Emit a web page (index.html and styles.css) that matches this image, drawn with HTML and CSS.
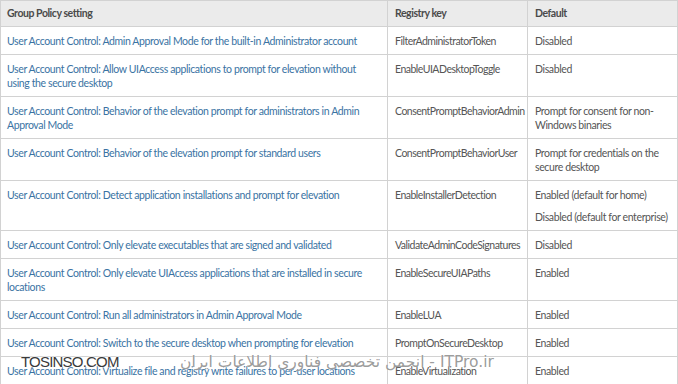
FILE: index.html
```html
<!DOCTYPE html>
<html>
<head>
<meta charset="utf-8">
<link rel="stylesheet" href="styles.css">
</head>
<body>
<div class="wrap">
<table class="gp">
<thead>
<tr><th class="c1">Group Policy setting</th><th class="c2">Registry key</th><th class="c3">Default</th></tr>
</thead>
<tbody>
<tr><td class="link">User Account Control: Admin Approval Mode for the built-in Administrator account</td><td class="key">FilterAdministratorToken</td><td>Disabled</td></tr>
<tr><td class="link">User Account Control: Allow UIAccess applications to prompt for elevation without using the secure desktop</td><td class="key">EnableUIADesktopToggle</td><td>Disabled</td></tr>
<tr><td class="link">User Account Control: Behavior of the elevation prompt for administrators in Admin Approval Mode</td><td class="key">ConsentPromptBehaviorAdmin</td><td>Prompt for consent for non-Windows binaries</td></tr>
<tr><td class="link">User Account Control: Behavior of the elevation prompt for standard users</td><td class="key">ConsentPromptBehaviorUser</td><td>Prompt for credentials on the secure desktop</td></tr>
<tr><td class="link">User Account Control: Detect application installations and prompt for elevation</td><td class="key">EnableInstallerDetection</td><td><p class="para">Enabled (default for home)</p><p class="para second">Disabled (default for enterprise)</p></td></tr>
<tr><td class="link">User Account Control: Only elevate executables that are signed and validated</td><td class="key">ValidateAdminCodeSignatures</td><td>Disabled</td></tr>
<tr><td class="link">User Account Control: Only elevate UIAccess applications that are installed in secure locations</td><td class="key">EnableSecureUIAPaths</td><td>Enabled</td></tr>
<tr><td class="link">User Account Control: Run all administrators in Admin Approval Mode</td><td class="key">EnableLUA</td><td>Enabled</td></tr>
<tr><td class="link">User Account Control: Switch to the secure desktop when prompting for elevation</td><td class="key">PromptOnSecureDesktop</td><td>Enabled</td></tr>
<tr><td class="link">User Account Control: Virtualize file and registry write failures to per-user locations</td><td class="key">EnableVirtualization</td><td>Enabled</td></tr>
</tbody>
</table>
<div class="wm wm-en">TOSINSO.COM</div>
<div class="wm wm-fa" dir="rtl">ITPro.ir - انجمن تخصصی فناوری اطلاعات ایران</div>
</div>
</body>
</html>
```
FILE: styles.css
```css
html, body {
  margin: 0;
  padding: 0;
  background: #ffffff;
}
.wrap {
  position: relative;
  width: 678px;
  height: 384px;
  overflow: hidden;
}
.gp {
  border-collapse: collapse;
  width: 678px;
  font-family: "Lato", "Liberation Sans", sans-serif;
  font-size: 10.5px;
  letter-spacing: -0.38px;
  line-height: 14px;
  color: #555555;
  table-layout: fixed;
}
.gp th, .gp td {
  border: 1px solid #d2d2d2;
  padding: 7px 7px 6px 7px;
  text-align: left;
  vertical-align: top;
}
.gp th {
  background: #ebebeb;
  font-weight: 700;
  color: #4a4a4a;
  padding-top: 5px;
  letter-spacing: -0.45px;
}
.gp th:first-child, .gp td:first-child {
  padding-left: 6px;
}
.c1 { width: 373px; }
.c2 { width: 125px; }
.c3 { width: auto; }
.gp td.link {
  color: #3a73a3;
}
.gp td.key {
  letter-spacing: -0.5px;
}
.para {
  margin: 0;
}
.para.second {
  margin-top: 8px;
}
.wm {
  position: absolute;
  white-space: nowrap;
}
.wm-en {
  left: 21px;
  top: 354px;
  font-family: "Liberation Sans", sans-serif;
  font-size: 15px;
  line-height: 15px;
  color: #3a3a3a;
  text-shadow: 0 0 2px #ffffff, 0 0 2px #ffffff, 0 0 1px #ffffff;
  letter-spacing: -0.8px;
}
.wm-fa {
  left: 180px;
  top: 353px;
  font-family: "DejaVu Sans", sans-serif;
  font-size: 15.5px;
  line-height: 18px;
  color: rgba(130,130,130,0.8);
  text-shadow: 0 0 1px #ffffff;
}
```
